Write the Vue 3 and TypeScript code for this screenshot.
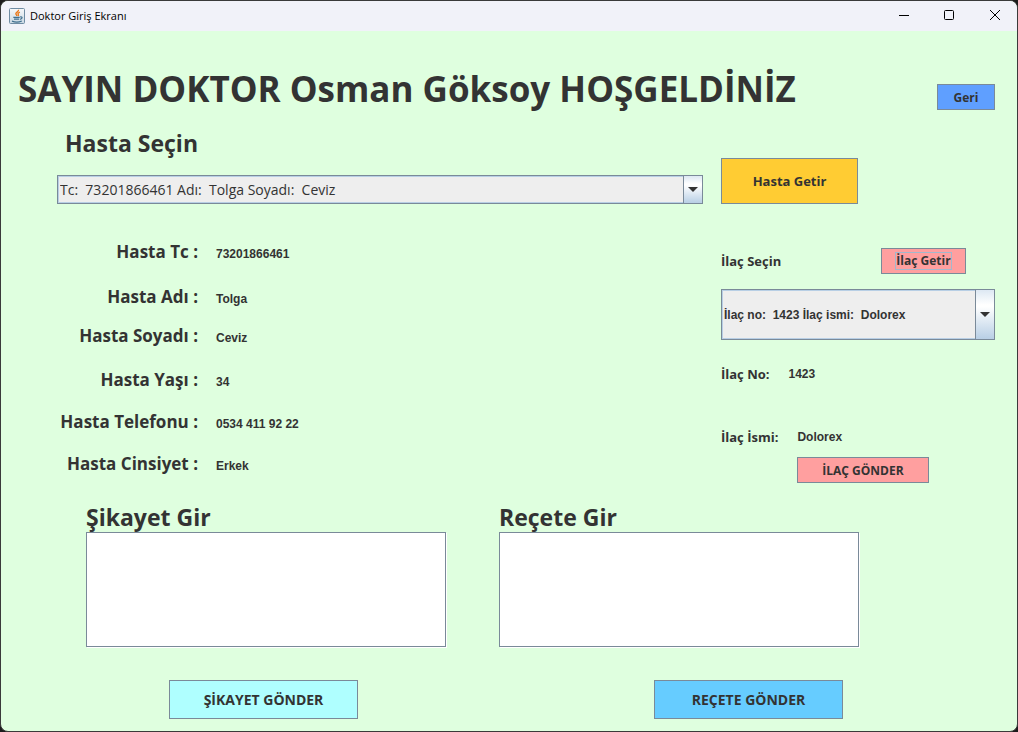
<script setup lang="ts">
import { ref } from 'vue'

interface Field {
  id: string
  label: string
  value: string
}

const doctor = 'Osman Göksoy'

const patients = ['Tc:\u00a0 73201866461 Adı:\u00a0 Tolga Soyadı:\u00a0 Ceviz']
const drugs = ['İlaç no:\u00a0 1423 İlaç ismi:\u00a0 Dolorex']

const selectedPatient = ref(patients[0])
const selectedDrug = ref(drugs[0])
const complaint = ref('')
const prescription = ref('')

const patientFields: Field[] = [
  { id: 'tc', label: 'Hasta Tc :', value: '73201866461' },
  { id: 'name', label: 'Hasta Adı :', value: 'Tolga' },
  { id: 'surname', label: 'Hasta Soyadı :', value: 'Ceviz' },
  { id: 'age', label: 'Hasta Yaşı :', value: '34' },
  { id: 'phone', label: 'Hasta Telefonu :', value: '0534 411 92 22' },
  { id: 'gender', label: 'Hasta Cinsiyet :', value: 'Erkek' },
]
</script>

<template>
  <div class="window">
    <header class="titlebar">
      <svg class="app-icon" viewBox="0 0 16 16" aria-hidden="true">
        <defs>
          <linearGradient id="tile" x1="0" y1="0" x2="0" y2="1">
            <stop offset="0" stop-color="#f6f8fa" />
            <stop offset="1" stop-color="#c9d8e3" />
          </linearGradient>
        </defs>
        <rect x="0.5" y="0.5" width="15" height="15" rx="1" fill="url(#tile)" stroke="#6f8ca3" />
        <path d="M9.500 1.800c.6 2-3.600 2.600-2.600 4.300.4.700 1 1 .9 1.900M10.900 4.200c-1.900.7-2.300 1.500-1.600 2.300.4.500.2 1-.3 1.500" fill="none" stroke="#ea7a1e" stroke-width="1.400" />
        <path d="M4.300 9.300h6.400M5 11.200h5.200M11.200 8.900c2.600-.5 2.400 1.900-.1 2.400M3 13.100c2.700 1.100 7.400 1 9.800-.1" fill="none" stroke="#41708f" stroke-width="1.200" />
      </svg>
      <span class="caption">Doktor Giriş Ekranı</span>
      <div class="window-controls">
        <button type="button" aria-label="Simge durumuna küçült">
          <svg viewBox="0 0 12 12"><path d="M0 5.500h10" /></svg>
        </button>
        <button type="button" aria-label="Ekranı kapla">
          <svg viewBox="0 0 12 12"><rect x="0.500" y="0.500" width="9" height="9" rx="1" /></svg>
        </button>
        <button type="button" aria-label="Kapat">
          <svg viewBox="0 0 12 12"><path d="M1 0l10 10M11 0L1 10" /></svg>
        </button>
      </div>
    </header>

    <main class="content">
      <div class="welcome">
        <h1>SAYIN DOKTOR {{ doctor }} HOŞGELDİNİZ</h1>
        <button type="button" class="btn back">Geri</button>
      </div>

      <section class="picker">
        <div class="picker-field">
          <label class="heading" for="patient">Hasta Seçin</label>
          <div class="combo patient-combo">
            <select id="patient" v-model="selectedPatient">
              <option v-for="p in patients" :key="p" :value="p">{{ p }}</option>
            </select>
            <span class="arrow" aria-hidden="true">
              <svg viewBox="0 0 10 5"><path d="M0 0h10L5 5z" /></svg>
            </span>
          </div>
        </div>
        <button type="button" class="btn fetch-patient">Hasta Getir</button>
      </section>

      <section class="details">
        <dl class="patient">
          <template v-for="f in patientFields" :key="f.id">
            <dt>{{ f.label }}</dt>
            <dd>{{ f.value }}</dd>
          </template>
        </dl>

        <div class="drug">
          <div class="drug-head">
            <label for="drug">İlaç Seçin</label>
            <button type="button" class="btn fetch-drug"><span>İlaç Getir</span></button>
          </div>
          <div class="combo drug-combo">
            <select id="drug" v-model="selectedDrug">
              <option v-for="d in drugs" :key="d" :value="d">{{ d }}</option>
            </select>
            <span class="arrow" aria-hidden="true">
              <svg viewBox="0 0 10 5"><path d="M0 0h10L5 5z" /></svg>
            </span>
          </div>
          <dl class="drug-info">
            <div><dt>İlaç No:</dt><dd>1423</dd></div>
            <div><dt>İlaç İsmi:</dt><dd>Dolorex</dd></div>
          </dl>
          <button type="button" class="btn send-drug">İLAÇ GÖNDER</button>
        </div>
      </section>

      <section class="notes">
        <div class="note">
          <label class="heading" for="complaint">Şikayet Gir</label>
          <textarea id="complaint" v-model="complaint"></textarea>
          <button type="button" class="btn send-complaint">ŞİKAYET GÖNDER</button>
        </div>
        <div class="note">
          <label class="heading" for="prescription">Reçete Gir</label>
          <textarea id="prescription" v-model="prescription"></textarea>
          <button type="button" class="btn send-prescription">REÇETE GÖNDER</button>
        </div>
      </section>
    </main>
  </div>
</template>

<style>
body {
  margin: 0;
  background: #1c1c1c;
}
</style>

<style scoped>
* {
  box-sizing: border-box;
}

.window {
  display: flex;
  flex-direction: column;
  min-height: 100vh;
  border: 1px solid #3a3a3a;
  border-radius: 8px;
  overflow: hidden;
  background: #dfffdf;
  color: #333;
  font-family: 'Open Sans', 'Noto Sans', sans-serif;
  font-weight: 700;
}

.titlebar {
  display: flex;
  align-items: center;
  height: 30px;
  padding-left: 8px;
  background: #f1f2f9;
  color: #000;
  font-weight: 400;
}

.app-icon {
  width: 16px;
  height: 16px;
}

.caption {
  margin-left: 5px;
  font-size: 11px;
  line-height: 16px;
}

.window-controls {
  display: flex;
  height: 100%;
  margin-left: auto;
}

.window-controls button {
  display: flex;
  align-items: center;
  justify-content: center;
  width: 45px;
  padding: 0;
  border: 0;
  background: transparent;
}

.window-controls svg {
  width: 12px;
  height: 12px;
  fill: none;
  stroke: #000;
  stroke-width: 1;
}

.content {
  display: flex;
  flex-direction: column;
}

.welcome {
  display: flex;
  align-items: flex-end;
  justify-content: space-between;
  height: 79px;
  padding: 0 22px 0 17px;
}

h1 {
  margin: 0;
  font-size: 35px;
  line-height: 42px;
}

.heading {
  font-size: 23px;
  line-height: 32px;
}

.btn {
  padding: 0;
  border: 1px solid #7a8a99;
  color: #333;
  font-family: inherit;
  font-size: 12px;
  font-weight: 700;
}

.back {
  width: 58px;
  height: 26px;
  background: #5f9fff;
}

.picker {
  display: grid;
  grid-template-columns: 1fr 274px;
  column-gap: 18px;
  align-items: end;
  margin-top: 17px;
  padding: 0 22px 0 56px;
}

.picker-field {
  display: flex;
  flex-direction: column;
  gap: 16px;
}

.picker-field .heading {
  padding-left: 8px;
}

.fetch-patient {
  width: 137px;
  height: 46px;
  background: #ffcc33;
  font-size: 13px;
}

.combo {
  display: grid;
}

.combo select {
  grid-area: 1 / 1;
  width: 100%;
  height: 100%;
  padding: 0 20px 0 2px;
  border: 1px solid #7a8a99;
  border-radius: 0;
  outline: 0;
  appearance: none;
  background: #eee;
  box-shadow: inset 0 0 0 1px #b8cfe5;
  color: #333;
}

.arrow {
  grid-area: 1 / 1;
  justify-self: end;
  display: flex;
  align-items: center;
  justify-content: center;
  width: 20px;
  border: 1px solid #7a8a99;
  background: linear-gradient(#dde8f3, #fff 30%, #fff 34%, #b8cfe5);
  pointer-events: none;
}

.arrow svg {
  width: 10px;
  height: 5px;
  fill: #333;
}

.patient-combo {
  height: 29px;
}

.patient-combo select {
  font-family: 'Open Sans', 'Noto Sans', sans-serif;
  font-size: 14px;
  font-weight: 400;
}

.details {
  display: grid;
  grid-template-columns: 1fr 274px;
  column-gap: 18px;
  padding: 35px 22px 0 56px;
}

dl,
dd {
  margin: 0;
}

dd,
.drug-combo select {
  font-family: 'Liberation Sans', Arial, sans-serif;
  font-size: 12px;
  font-weight: 700;
}

.patient {
  display: grid;
  grid-template-columns: 141px 1fr;
  grid-template-rows: 26px 45px 39px 44px 42px 42px;
  column-gap: 18px;
  align-items: end;
}

.patient dt {
  font-size: 17px;
  line-height: 26px;
  text-align: right;
  white-space: nowrap;
}

.patient dd {
  line-height: 22px;
}

.drug {
  display: flex;
  flex-direction: column;
  padding-top: 9px;
  font-size: 13px;
}

.drug-head {
  display: flex;
  align-items: center;
  justify-content: space-between;
  padding-right: 29px;
}

.fetch-drug {
  width: 85px;
  height: 26px;
  background: #ff9f9f;
}

.fetch-drug span {
  display: inline-block;
  border: 1px solid #a3b8cc;
  line-height: 16px;
}

.drug-combo {
  height: 51px;
  margin-top: 15px;
}

.drug-info {
  display: grid;
  row-gap: 43px;
  margin-top: 24px;
}

.drug-info div {
  display: flex;
  align-items: center;
  gap: 19px;
  line-height: 20px;
}

.send-drug {
  width: 132px;
  height: 26px;
  margin: 10px 0 0 76px;
  background: #ff9f9f;
}

.notes {
  display: grid;
  grid-template-columns: 1fr 1fr;
  column-gap: 53px;
  margin-top: 19px;
  padding: 0 158px 12px 85px;
}

.note {
  display: flex;
  flex-direction: column;
}

.note .heading {
  line-height: 30px;
}

textarea {
  height: 115px;
  margin: 0;
  padding: 2px;
  border: 1px solid #7a8a99;
  outline: 0;
  resize: none;
  background: #fff;
  box-shadow: 1px 1px 0 #fff;
  color: #333;
  font: 13px 'Liberation Mono', monospace;
}

.send-complaint,
.send-prescription {
  width: 189px;
  height: 39px;
  margin-top: 33px;
  font-size: 14px;
}

.send-complaint {
  margin-left: 83px;
  background: #afffff;
}

.send-prescription {
  margin-left: 155px;
  background: #66ccff;
}
</style>
